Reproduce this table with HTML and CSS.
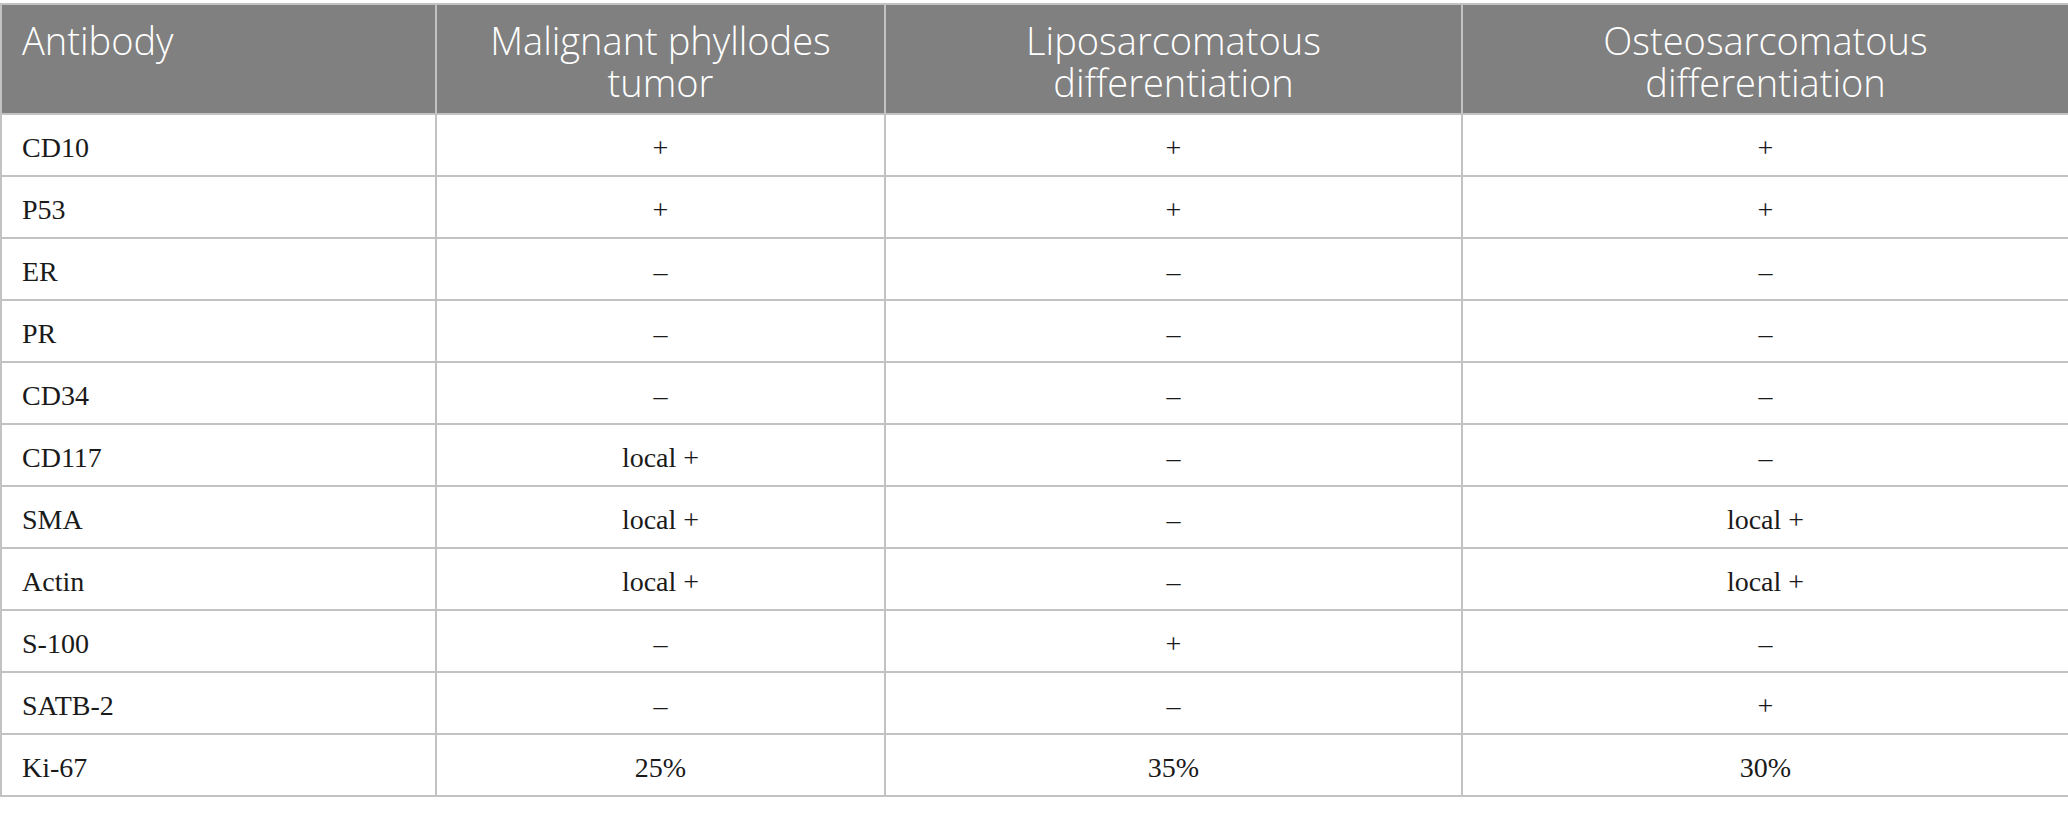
FILE: index.html
```html
<!DOCTYPE html>
<html lang="en">
<head>
    <meta charset="UTF-8">
    <meta name="viewport" content="width=device-width, initial-scale=1.0">
    <title>Immunohistochemistry</title>
    <link rel="stylesheet" href="styles.css">
</head>
<body>
    <table class="ihc-table">
        <colgroup>
            <col class="col-name">
            <col class="col-mpt">
            <col class="col-lipo">
            <col class="col-osteo">
        </colgroup>
        <thead>
            <tr>
                <th class="first">Antibody</th>
                <th>Malignant phyllodes<br>tumor</th>
                <th>Liposarcomatous<br>differentiation</th>
                <th>Osteosarcomatous<br>differentiation</th>
            </tr>
        </thead>
        <tbody>
            <tr><td>CD10</td><td>+</td><td>+</td><td>+</td></tr>
            <tr><td>P53</td><td>+</td><td>+</td><td>+</td></tr>
            <tr><td>ER</td><td>–</td><td>–</td><td>–</td></tr>
            <tr><td>PR</td><td>–</td><td>–</td><td>–</td></tr>
            <tr><td>CD34</td><td>–</td><td>–</td><td>–</td></tr>
            <tr><td>CD117</td><td>local +</td><td>–</td><td>–</td></tr>
            <tr><td>SMA</td><td>local +</td><td>–</td><td>local +</td></tr>
            <tr><td>Actin</td><td>local +</td><td>–</td><td>local +</td></tr>
            <tr><td>S-100</td><td>–</td><td>+</td><td>–</td></tr>
            <tr><td>SATB-2</td><td>–</td><td>–</td><td>+</td></tr>
            <tr><td>Ki-67</td><td>25%</td><td>35%</td><td>30%</td></tr>
        </tbody>
    </table>
</body>
</html>
```

FILE: styles.css
```css
body {
    margin: 0;
    padding: 3px 0 0 0;
    background-color: #fff;
}
.ihc-table {
    width: 2068px;
    border-collapse: collapse;
    table-layout: fixed;
    border: 2px solid #c2c2c2;
}
.col-name { width: 435px; }
.col-mpt { width: 449px; }
.col-lipo { width: 577px; }
.col-osteo { width: 607px; }
.ihc-table th {
    background-color: #7f807f;
    color: #fff;
    font-family: "Open Sans", sans-serif;
    font-weight: 300;
    font-size: 38px;
    line-height: 42px;
    height: 84px;
    padding: 14px 20px 10px 20px;
    text-align: center;
    vertical-align: top;
    border: 2px solid #c2c2c2;
}
.ihc-table th.first {
    text-align: left;
}
.ihc-table td {
    font-family: "Liberation Serif", "Times New Roman", serif;
    font-size: 28px;
    color: #1a1a1a;
    height: 54px;
    padding: 6px 20px 0 20px;
    text-align: center;
    vertical-align: middle;
    border: 2px solid #c2c2c2;
}
.ihc-table td:first-child {
    text-align: left;
}
```
